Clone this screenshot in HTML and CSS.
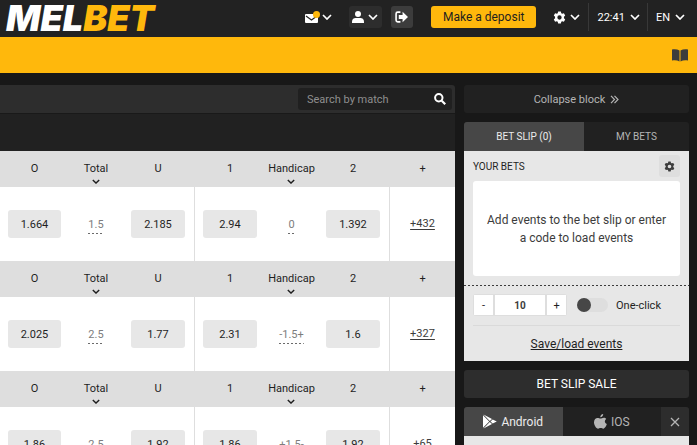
FILE: index.html
```html
<!DOCTYPE html>
<html lang="en">
<head>
<meta charset="utf-8">
<meta name="viewport" content="width=device-width, initial-scale=1">
<title>Melbet</title>
<link rel="stylesheet" href="styles.css">
</head>
<body>
<svg class="sprite" aria-hidden="true">
  <symbol id="chevron" viewBox="0 0 10 6"><path d="M1 1l4 4 4-4" fill="none" stroke="currentColor" stroke-width="1.7"/></symbol>
  <symbol id="gear" viewBox="0 0 24 24"><path fill="currentColor" fill-rule="evenodd" d="M9.5 1h5l.8 3.2 1.6.9 3.2-1 2.4 4.3-2.3 2.4v2.4l2.3 2.4-2.4 4.3-3.2-1-1.6.9-.8 3.2h-5l-.8-3.2-1.6-.9-3.2 1-2.4-4.3 2.3-2.4v-2.4L1.500 8.400 3.900 4.100l3.200 1 1.600-.9zM12 8a4 4 0 100 8 4 4 0 000-8z"/></symbol>
</svg>
<div class="app">
  <header class="topbar">
    <a class="logo" href="#"><span class="logo-mel">MEL</span><span class="logo-bet">BET</span></a>
    <button class="plain mail" aria-label="Messages">
      <svg width="15" height="13" viewBox="0 0 15 13"><path d="M1 3h11a1 1 0 011 1v7a1 1 0 01-1 1H1a1 1 0 01-1-1V4a1 1 0 011-1z" fill="#fff"/><path d="M1 5l5.500 4L12 5" fill="none" stroke="#222" stroke-width="1.200"/><circle cx="11.500" cy="3.500" r="3.500" fill="#ffb80c"/></svg>
      <svg class="chev" aria-hidden="true"><use href="#chevron"/></svg>
    </button>
    <button class="tile user" aria-label="Account">
      <svg width="12" height="12" viewBox="0 0 12 12"><circle cx="6" cy="3" r="3" fill="#fff"/><path d="M0 12v-1.500C0 8 2 7 3.500 7h5C10 7 12 8 12 10.500V12z" fill="#fff"/></svg>
      <svg class="chev" aria-hidden="true"><use href="#chevron"/></svg>
    </button>
    <button class="tile exit" aria-label="Log out">
      <svg width="13" height="12" viewBox="0 0 12 11"><path d="M5 1H2.500A1.500 1.500 0 001 2.500v6A1.500 1.500 0 002.500 10H5" fill="none" stroke="#fff" stroke-width="1.500"/><path d="M3.500 3.700H7V.700l5 4.800-5 4.800v-3H3.500z" fill="#fff"/></svg>
    </button>
    <button class="deposit">Make a deposit</button>
    <button class="plain settings" aria-label="Settings">
      <svg width="13" height="13"><use href="#gear"/></svg>
      <svg class="chev" aria-hidden="true"><use href="#chevron"/></svg>
    </button>
    <button class="plain divided clock">22:41 <svg class="chev" aria-hidden="true"><use href="#chevron"/></svg></button>
    <button class="plain divided lang">EN <svg class="chev" aria-hidden="true"><use href="#chevron"/></svg></button>
  </header>
  <nav class="ribbon">
    <a href="#" aria-label="Rules"><svg width="16" height="13" viewBox="0 0 16 13"><path d="M0 .5C3 0 5.500.300 7.500 1.500v11C5.500 11.300 3 11 0 11.500zM16 .5C13 0 10.500.300 8.500 1.500v11c2-1.200 4.500-1.500 7.500-1z" fill="#3c3c3c"/></svg></a>
  </nav>
  <div class="columns">
    <main class="feed">
      <div class="searchbar">
        <form class="search">
          <input type="search" placeholder="Search by match" aria-label="Search by match">
          <button type="button" aria-label="Search"><svg width="12" height="12" viewBox="0 0 12 12"><circle cx="4.800" cy="4.800" r="3.700" fill="none" stroke="#fff" stroke-width="2"/><path d="M7.700 7.700l3.500 3.500" stroke="#fff" stroke-width="2.200"/></svg></button>
        </form>
      </div>
      <div class="banner"></div>
      <table class="odds">
        <colgroup><col class="c-edge"><col class="c-mid"><col class="c-wide"><col class="c-wide"><col class="c-thin"><col class="c-wide"><col class="c-more"></colgroup>
        <tbody>
          <tr class="heads"><th class="first">O</th><th><button>Total<svg class="drop"><use href="#chevron"/></svg></button></th><th class="last">U</th><th class="first split">1</th><th><button>Handicap<svg class="drop"><use href="#chevron"/></svg></button></th><th class="last">2</th><th class="split">+</th></tr>
          <tr class="lines"><td class="first"><button class="odd">1.664</button></td><td><button class="param">1.5</button></td><td class="last"><button class="odd">2.185</button></td><td class="first split"><button class="odd">2.94</button></td><td><button class="param">0</button></td><td class="last"><button class="odd">1.392</button></td><td class="split"><a class="more" href="#">+432</a></td></tr>
        </tbody>
        <tbody>
          <tr class="heads"><th class="first">O</th><th><button>Total<svg class="drop"><use href="#chevron"/></svg></button></th><th class="last">U</th><th class="first split">1</th><th><button>Handicap<svg class="drop"><use href="#chevron"/></svg></button></th><th class="last">2</th><th class="split">+</th></tr>
          <tr class="lines"><td class="first"><button class="odd">2.025</button></td><td><button class="param">2.5</button></td><td class="last"><button class="odd">1.77</button></td><td class="first split"><button class="odd">2.31</button></td><td><button class="param">-1.5+</button></td><td class="last"><button class="odd">1.6</button></td><td class="split"><a class="more" href="#">+327</a></td></tr>
        </tbody>
        <tbody>
          <tr class="heads"><th class="first">O</th><th><button>Total<svg class="drop"><use href="#chevron"/></svg></button></th><th class="last">U</th><th class="first split">1</th><th><button>Handicap<svg class="drop"><use href="#chevron"/></svg></button></th><th class="last">2</th><th class="split">+</th></tr>
          <tr class="lines"><td class="first"><button class="odd">1.86</button></td><td><button class="param">2.5</button></td><td class="last"><button class="odd">1.92</button></td><td class="first split"><button class="odd">1.86</button></td><td><button class="param">+1.5-</button></td><td class="last"><button class="odd">1.92</button></td><td class="split"><a class="more" href="#">+65</a></td></tr>
        </tbody>
      </table>
    </main>
    <aside class="side">
      <button class="collapse">Collapse block <svg width="9" height="9" viewBox="0 0 9 9"><path d="M1 .8l3.500 3.700L1 8.200M4.500.800L8 4.500 4.500 8.200" fill="none" stroke="currentColor" stroke-width="1.200"/></svg></button>
      <section class="slip">
        <div class="tabs"><button class="tab active">BET SLIP (0)</button><button class="tab">MY BETS</button></div>
        <div class="panel">
          <div class="panel-head"><h2>YOUR BETS</h2><button class="gear" aria-label="Bet slip settings"><svg width="11" height="11"><use href="#gear"/></svg></button></div>
          <p class="empty">Add events to the bet slip or enter a code to load events</p>
          <div class="stake">
            <div class="stepper"><button aria-label="Decrease">-</button><input type="text" value="10" aria-label="Stake"><button aria-label="Increase">+</button></div>
            <label class="toggle"><input type="checkbox">One-click</label>
          </div>
          <div class="save"><a href="#">Save/load events</a></div>
        </div>
      </section>
      <button class="sale">BET SLIP SALE</button>
      <section class="apps">
        <div class="tabs">
          <button class="app-tab active"><svg width="14" height="15" viewBox="0 0 14 15"><path d="M.5.500L9 5 6.800 7.100zM0 1.200L6.200 7.500 0 13.800zM.5 14.500L6.800 7.900 9 10zM9.700 5.400L13.800 7.500 9.700 9.600 7.500 7.500z" fill="#fff"/></svg>Android</button>
          <button class="app-tab"><svg width="13" height="15" viewBox="0 0 13 15"><path d="M9.200 0c.1 1.700-1.200 3.300-2.900 3.300C6.100 1.700 7.600.200 9.200 0zM12.300 5.100c-2.100 1.300-1.800 4.100.5 5-.5 1.600-1.900 4.600-3.500 4.600-1 0-1.400-.6-2.600-.6s-1.700.6-2.600.6C2.200 14.700 0 11.300 0 8.300c0-2.900 1.800-4.400 3.600-4.400 1.200 0 2 .7 2.900.7.800 0 1.900-.8 3.300-.8 1 0 1.900.5 2.500 1.300z" fill="currentColor"/></svg>IOS</button>
          <button class="close" aria-label="Close"><svg width="10" height="10" viewBox="0 0 10 10"><path d="M1 1l8 8M9 1L1 9" stroke="currentColor" stroke-width="1.300"/></svg></button>
        </div>
        <div class="app-body"></div>
      </section>
    </aside>
  </div>
</div>
</body>
</html>
```
FILE: styles.css
```css
* { box-sizing: border-box; }
body { margin: 0; background: #181818; color: #1f1f1f; font-family: Roboto, "Liberation Sans", sans-serif; font-size: 11px; }
button, input { margin: 0; padding: 0; border: 0; background: none; color: inherit; font: inherit; }
button { cursor: pointer; }
svg { display: block; flex: none; }
.sprite { position: absolute; width: 0; height: 0; }
.app { height: 100vh; overflow: hidden; }

.topbar { display: flex; align-items: center; height: 37px; padding: 0 12px 0 6px; background: #222; color: #fff; font-size: 12px; }
.logo { display: flex; margin-right: auto; font-family: Inter, Roboto, sans-serif; font-size: 36px; line-height: 37px; font-weight: 900; font-style: italic; text-decoration: none; }
.logo-mel { color: #fff; }
.logo-bet { color: #ffb80c; }
.chev { width: 10px; height: 6px; }
.plain, .tile { display: flex; align-items: center; }
.mail { gap: 2px; margin-bottom: 3px; }
.tile { justify-content: center; height: 22px; margin-bottom: 3px; border-radius: 3px; }
.user { width: 33px; gap: 4px; margin-left: 17px; background: #2d2d2d; }
.exit { width: 22px; margin-left: 9px; background: #3c3c3c; }
.deposit { height: 22px; padding: 0 12px; margin: 0 0 3px 18px; border-radius: 3px; background: #ffb80c; color: #1f1f1f; }
.settings { gap: 4px; margin: 0 8px 3px 17px; }
.divided { height: 28px; margin-bottom: 3px; padding: 0 7px 0 8px; border-left: 1px solid #383838; font-size: 11px; gap: 5px; }
.lang { padding-right: 0; }

.ribbon { display: flex; align-items: center; justify-content: flex-end; height: 36px; padding: 0 9px; background: #ffb80c; }

.columns { display: grid; grid-template-columns: minmax(0, 1fr) 225px; gap: 9px; align-items: start; padding: 12px 8px 0 0; }
.searchbar { display: flex; justify-content: flex-end; height: 28px; padding: 3px; background: #2d2d2d; border-radius: 0 3px 0 0; }
.search { display: flex; align-items: center; width: 154px; padding: 0 6px 0 9px; border-radius: 3px; background: #202020; }
.search input { flex: 1; min-width: 0; outline: 0; appearance: none; color: #fff; }
.search input::placeholder { color: #8f8f8f; opacity: 1; }
.banner { height: 38px; background: #212121; border-top: 1px solid #191919; }

.odds { width: 100%; table-layout: fixed; border-collapse: separate; border-spacing: 0; background: #fff; text-align: center; }
.c-edge { width: 65px; }
.c-mid { width: 62px; }
.c-wide { width: 67px; }
.c-thin { width: 61px; }
.c-more { width: 66px; }
.odds th, .odds td { padding: 0; }
.odds .first { padding-left: 4px; }
.odds .last { padding-right: 5px; }
.heads { height: 36px; background: #dedede; }
.heads th { font-weight: 400; line-height: 14px; vertical-align: top; }
.odds .heads th { padding-top: 11px; }
.heads .split { border-left: 1px solid #dedede; }
.heads button { position: relative; }
.drop { position: absolute; top: 100%; left: 50%; width: 8px; height: 5px; margin: 3px 0 0 -4px; }
.lines { height: 74px; }
.lines .split { border-left: 1px solid #dedede; }
.odd { width: calc(100% - 8px); height: 28px; border-radius: 3px; background: #e7e7e7; }
.param { padding: 4px 0 2px; color: #7d7d7d; line-height: 14px; background: repeating-linear-gradient(90deg, #6b6b6b 0 2px, transparent 2px 4px) bottom / 100% 1px no-repeat; }
.more { color: #3c3c3c; line-height: 14px; text-decoration: underline; text-underline-offset: 2px; text-decoration-skip-ink: none; }

.side { display: flex; flex-direction: column; gap: 9px; }
.collapse { display: flex; align-items: center; justify-content: center; gap: 5px; height: 28px; border-radius: 3px; background: #212121; color: #b5b5b5; }
.tabs { display: flex; height: 29px; overflow: hidden; border-radius: 3px 3px 0 0; background: #212121; color: #b5b5b5; }
.tab { flex: 105; font-size: 10px; }
.tab.active { flex: 120; }
.active { background: #474747; color: #ececec; }
.panel { padding: 0 9px; background: #e7e7e7; }
.panel-head { display: flex; align-items: center; justify-content: space-between; height: 30px; }
.panel-head h2 { margin: 0; font-size: 10px; font-weight: 400; }
.gear { display: flex; align-items: center; justify-content: center; width: 21px; height: 22px; border-radius: 3px; background: #dedede; color: #3c3c3c; }
.empty { display: flex; align-items: center; height: 95px; margin: 0; padding: 0 12px; border-radius: 3px; background: #fff; color: #3c3c3c; font-size: 12px; line-height: 18px; text-align: center; }
.stake { display: flex; align-items: center; gap: 10px; height: 40px; margin: 9px -9px 0; padding: 0 9px; background: repeating-linear-gradient(90deg, #3c3c3c 0 2px, transparent 2px 4px) top / 100% 1px no-repeat; }
.stepper { display: flex; gap: 2px; height: 22px; padding: 1px; border-radius: 3px; background: #dedede; }
.stepper button { width: 19px; background: #fff; }
.stepper input { width: 50px; background: #fff; color: #3c3c3c; font-size: 10px; font-weight: 700; text-align: center; }
.toggle { display: flex; align-items: center; gap: 8px; }
.toggle input { display: block; width: 31px; height: 14px; appearance: none; border-radius: 7px; background: #dedede; }
.toggle input::before { content: ""; display: block; width: 14px; height: 14px; border-radius: 50%; background: #474747; }
.toggle input:checked::before { margin-left: 17px; }
.save { height: 36px; border-top: 1px solid #dadada; font-size: 12px; line-height: 36px; text-align: center; }
.save a { color: #1f1f1f; text-decoration-skip-ink: none; }
.sale { height: 28px; border-radius: 3px; background: #2d2d2d; color: #fff; font-size: 12px; }
.app-tab { display: flex; flex: 1; align-items: center; justify-content: center; gap: 4px; font-size: 12px; }
.close { display: flex; align-items: center; justify-content: center; width: 28px; background: #2d2d2d; }
.app-body { height: 120px; background: #e7e7e7; }
```
